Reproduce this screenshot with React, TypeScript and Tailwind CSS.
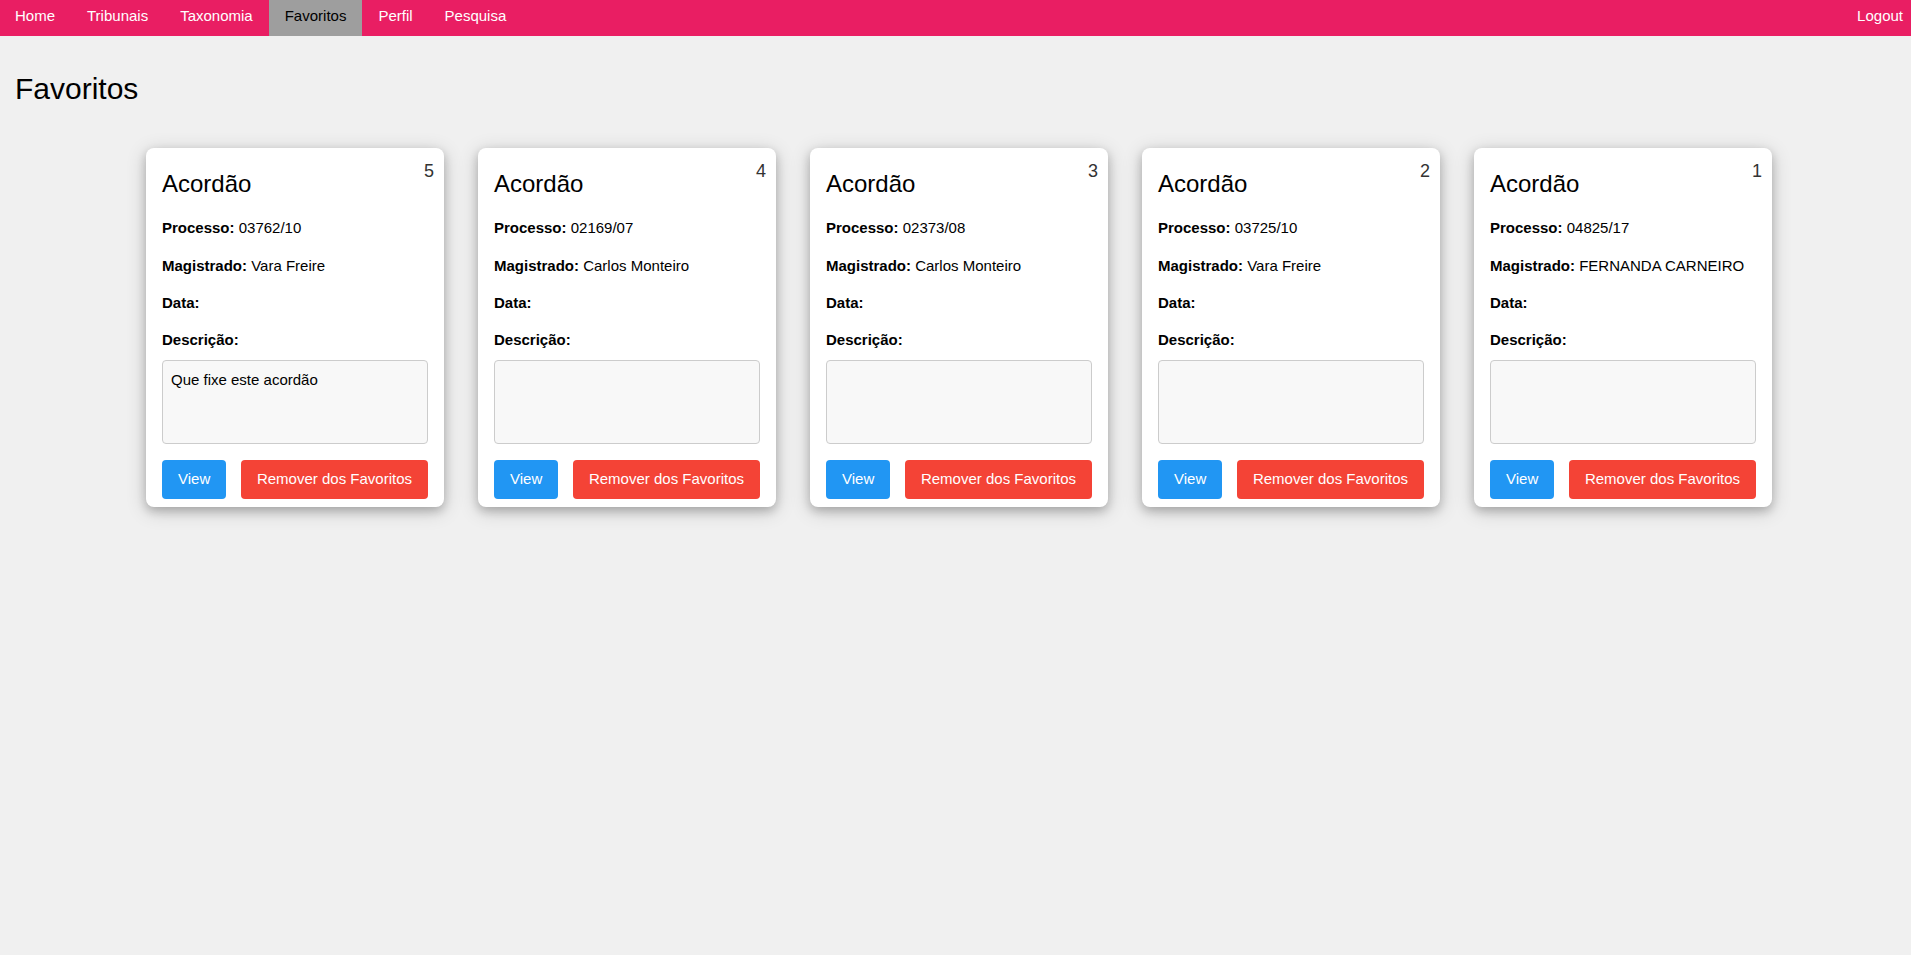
import React from "react";

type Fav = { n: number; processo: string; magistrado: string; descricao: string };

const favs: Fav[] = [
  { n: 5, processo: "03762/10", magistrado: "Vara Freire", descricao: "Que fixe este acordão" },
  { n: 4, processo: "02169/07", magistrado: "Carlos Monteiro", descricao: "" },
  { n: 3, processo: "02373/08", magistrado: "Carlos Monteiro", descricao: "" },
  { n: 2, processo: "03725/10", magistrado: "Vara Freire", descricao: "" },
  { n: 1, processo: "04825/17", magistrado: "FERNANDA CARNEIRO", descricao: "" },
];

const navItems = ["Home", "Tribunais", "Taxonomia", "Favoritos", "Perfil", "Pesquisa"];

function Card({ f }: { f: Fav }) {
  return (
    <div className="relative w-[298px] bg-white rounded-[8px] px-4 pt-2 pb-[8px] shadow-[0_4px_10px_0_rgba(0,0,0,0.2),0_4px_20px_0_rgba(0,0,0,0.19)]">
      <span className="absolute right-[10px] top-[10px] text-[18px] leading-[27px] text-[#333]">{f.n}</span>
      <h3 className="mt-[10px] text-[24px] leading-[36px] font-normal text-black">Acordão</h3>
      <p className="mt-[15px] text-[15px] leading-[22.5px]">
        <b>Processo:</b> {f.processo}
      </p>
      <p className="mt-[15px] text-[15px] leading-[22.5px]">
        <b>Magistrado:</b> {f.magistrado}
      </p>
      <p className="mt-[15px] text-[15px] leading-[22.5px]">
        <b>Data:</b>
      </p>
      <p className="mt-[14px] text-[15px] leading-[22.5px]">
        <b>Descrição:</b>
      </p>
      <div className="mt-[9px] h-[84px] w-full border border-[#ccc] rounded-[4px] bg-[#f8f8f8] px-2 py-2 text-[15px] leading-[22.5px] text-black">
        {f.descricao}
      </div>
      <div className="mt-4 flex justify-between">
        <button className="h-[38.5px] px-4 rounded-[4px] bg-[#2196f3] text-white text-[15px] leading-[22.5px]">View</button>
        <button className="h-[38.5px] px-4 rounded-[4px] bg-[#f44336] text-white text-[15px] leading-[22.5px]">Remover dos Favoritos</button>
      </div>
    </div>
  );
}

export default function App() {
  return (
    <div className="min-h-[955px] bg-[#f0f0f0] text-black" style={{ fontFamily: '"Liberation Sans", Arial, sans-serif' }}>
      <nav className="h-9 bg-[#e91e63] flex text-[15px] leading-[22.5px]">
        <div className="flex -ml-px">
          {navItems.map((it) => (
            <a
              key={it}
              className={
                it === "Favoritos"
                  ? "h-9 px-4 pt-[5px] bg-[#9e9e9e] text-black"
                  : "h-9 px-4 pt-[5px] text-white"
              }
            >
              {it}
            </a>
          ))}
        </div>
        <a className="ml-auto h-9 pl-4 pr-2 pt-[5px] text-white">Logout</a>
      </nav>
      <h2 className="mt-[30px] px-[15px] text-[30px] leading-[45px] font-normal">Favoritos</h2>
      <div className="mt-[37px] flex justify-center gap-[34px] pl-[7px]">
        {favs.map((f) => (
          <Card key={f.n} f={f} />
        ))}
      </div>
    </div>
  );
}
